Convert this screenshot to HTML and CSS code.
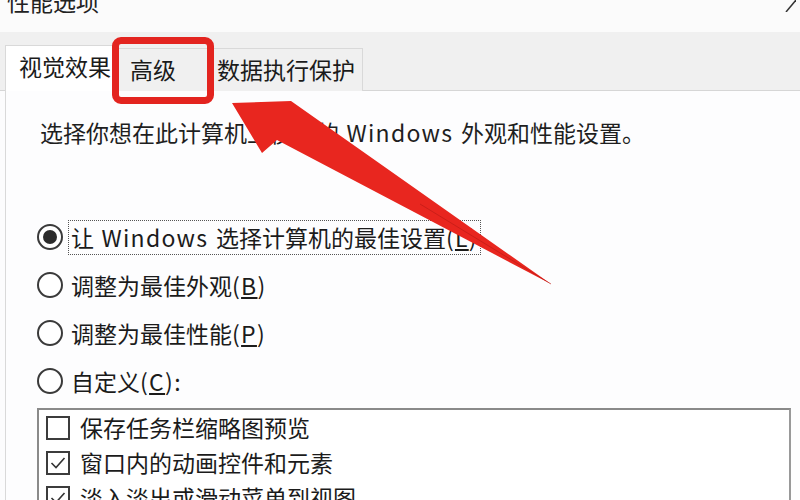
FILE: index.html
```html
<!DOCTYPE html>
<html lang="zh-CN">
<head>
<meta charset="utf-8">
<title>性能选项</title>
<link rel="stylesheet" href="styles.css">
</head>
<body>
<div class="dialog">
  <div class="titlebar">
    <span class="title-text">性能选项</span>
    <svg class="close-mark" width="12" height="12" viewBox="0 0 12 12"><path d="M2 12 L12 0" stroke="#333" stroke-width="1.5" fill="none"/></svg>
  </div>
  <div class="tabstrip">
    <div class="tab tab-active">视觉效果</div>
    <div class="tab tab-adv">高级</div>
    <div class="tab tab-dep">数据执行保护</div>
  </div>
  <div class="panel">
    <p class="desc">选择你想在此计算机上使用的<span class="latin"> Windows </span>外观和性能设置。</p>
    <div class="radios">
      <div class="radio-row">
        <span class="radio checked"></span>
        <span class="label focus">让<span class="latin"> Windows </span>选择计算机的最佳设置<span class="latin">(<u>L</u>)</span></span>
      </div>
      <div class="radio-row">
        <span class="radio"></span>
        <span class="label">调整为最佳外观<span class="latin">(<u>B</u>)</span></span>
      </div>
      <div class="radio-row">
        <span class="radio"></span>
        <span class="label">调整为最佳性能<span class="latin">(<u>P</u>)</span></span>
      </div>
      <div class="radio-row">
        <span class="radio"></span>
        <span class="label">自定义<span class="latin">(<u>C</u>):</span></span>
      </div>
    </div>
    <div class="listbox">
      <div class="check-row">
        <span class="checkbox"></span>
        <span class="check-label">保存任务栏缩略图预览</span>
      </div>
      <div class="check-row">
        <span class="checkbox"><svg width="20" height="20" viewBox="0 0 20 20"><path d="M3.5 10 L8 14.5 L16.5 5" stroke="#333" stroke-width="1.6" fill="none"/></svg></span>
        <span class="check-label">窗口内的动画控件和元素</span>
      </div>
      <div class="check-row">
        <span class="checkbox"><svg width="20" height="20" viewBox="0 0 20 20"><path d="M3.5 10 L8 14.5 L16.5 5" stroke="#333" stroke-width="1.6" fill="none"/></svg></span>
        <span class="check-label">淡入淡出或滑动菜单到视图</span>
      </div>
    </div>
  </div>
</div>
<div class="highlight-box"></div>
<svg class="arrow" width="800" height="500" viewBox="0 0 800 500">
  <polygon points="232,103 291,101 551,284 277,140 262,153" fill="#e8261f"/>
  <path d="M420 204 L551 284" stroke="#b81a16" stroke-width="1" fill="none" opacity="0.6"/>
</svg>
</body>
</html>
```
FILE: styles.css
```css
html, body {
  margin: 0;
  padding: 0;
}
body {
  width: 800px;
  height: 500px;
  overflow: hidden;
  background: #fcfcfd;
  font-family: "Noto Sans CJK SC", "Noto Sans", sans-serif;
  color: #1b1b1b;
  font-size: 23px;
  position: relative;
}
.latin {
  letter-spacing: 1.3px;
  word-spacing: 1px;
}
.dialog {
  display: flex;
  flex-direction: column;
}
.titlebar {
  height: 32px;
  overflow: hidden;
  display: flex;
  justify-content: space-between;
  align-items: flex-start;
  padding: 0 4px 0 7px;
  background: #fbfbfb;
}
.title-text {
  display: block;
  line-height: 33px;
  margin-top: -15px;
  color: #222;
}
.tabstrip {
  height: 58px;
  background: #f0f0f0;
  border-bottom: 1px solid #d6d6d6;
  display: flex;
  align-items: flex-end;
  padding-left: 5px;
}
.tab {
  height: 43px;
  display: flex;
  align-items: center;
  line-height: 33px;
  box-sizing: border-box;
  margin-bottom: -1px;
  border: 1px solid #d9d9d9;
  border-bottom: none;
}
.tab-active {
  height: 46px;
  background: #ffffff;
  width: 112px;
  padding-left: 13px;
  padding-bottom: 4px;
  border-right: none;
}
.tab-adv {
  width: 96px;
  padding-left: 12px;
  background: #f0f0f0;
  border-left: 1px solid #d3d3d3;
  padding-bottom: 2px;
}
.tab-dep {
  width: 150px;
  padding-left: 4px;
  background: #f0f0f0;
  border-left: none;
  padding-bottom: 2px;
}
.panel {
  margin-left: 5px;
  border-left: 1px solid #d9d9d9;
  background: #fdfdfe;
  height: 420px;
  padding-left: 31px;
  padding-right: 9px;
}
.desc {
  margin: 0;
  padding-top: 25px;
  padding-left: 3px;
  line-height: 33px;
  color: #1f1f1f;
}
.radios {
  margin-top: 64px;
  display: flex;
  flex-direction: column;
}
.radio-row {
  height: 48px;
  display: flex;
  align-items: center;
}
.radio {
  width: 26px;
  height: 26px;
  box-sizing: border-box;
  border: 2px solid #3a3a3a;
  border-radius: 50%;
  display: flex;
  align-items: center;
  justify-content: center;
  background: #fff;
}
.radio.checked::after {
  content: "";
  width: 14px;
  height: 14px;
  border-radius: 50%;
  background: #2b2b2b;
}
.label {
  margin-left: 5px;
  line-height: 33px;
  padding: 0 2px;
  border: 1px dotted transparent;
}
.label.focus {
  border: 1px dotted #555;
}
.listbox {
  margin-top: 3px;
  border: 2px solid #8a8a8a;
  border-right-color: #999;
  height: 120px;
  box-sizing: border-box;
  padding-left: 7px;
  background: #fff;
}
.check-row {
  height: 35px;
  display: flex;
  align-items: center;
}
.checkbox {
  width: 24px;
  height: 24px;
  box-sizing: border-box;
  border: 2px solid #3c3c3c;
  display: flex;
  align-items: center;
  justify-content: center;
  background: #fff;
}
.check-label {
  margin-left: 10px;
  line-height: 33px;
}
.highlight-box {
  position: absolute;
  left: 112px;
  top: 37px;
  width: 102px;
  height: 67px;
  box-sizing: border-box;
  border: 7px solid #e3241f;
  border-radius: 9px;
  pointer-events: none;
}
.arrow {
  position: absolute;
  left: 0;
  top: 0;
  pointer-events: none;
}
```
